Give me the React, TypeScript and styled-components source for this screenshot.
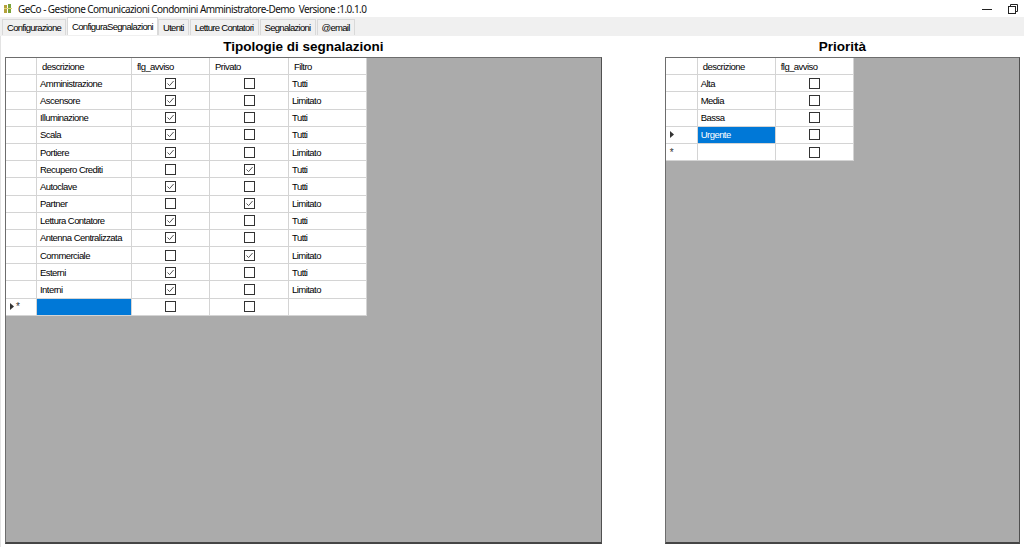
import React from 'react'
import styled, { createGlobalStyle } from 'styled-components'

const GlobalStyle = createGlobalStyle`
  html, body {
    margin: 0;
    padding: 0;
    background: #ffffff;
  }
  body {
    font-family: "Liberation Sans", Arial, sans-serif;
    font-size: 11px;
    color: #000;
  }
`

const Window = styled.div`
  width: 1024px;
  height: 547px;
  display: flex;
  flex-direction: column;
  background: #ffffff;
  overflow: hidden;
`

const TitleBar = styled.div`
  height: 17px;
  display: flex;
  align-items: center;
  padding-left: 4px;
  font-family: "Noto Sans", "Open Sans", sans-serif;
  font-size: 10px;
  color: #111;
`

const TitleText = styled.span`
  margin-left: 6px;
  white-space: pre;
  letter-spacing: -0.55px;
`

const WindowButtons = styled.div`
  margin-left: auto;
  display: flex;
  align-items: center;
  gap: 16px;
  padding-right: 6px;
`

const TabStrip = styled.div`
  height: 18px;
  display: flex;
  align-items: flex-end;
  background: #f0f0f0;
  padding-left: 2px;
  border-bottom: 1px solid #f0f0f0;
`

const Tab = styled.div<{ $active?: boolean }>`
  height: ${(p) => (p.$active ? 18 : 16)}px;
  display: flex;
  align-items: center;
  padding: 0 4px;
  margin-right: ${(p) => (p.$active ? 0 : 1)}px;
  background: ${(p) => (p.$active ? '#ffffff' : '#f0f0f0')};
  border: 1px solid #d9d9d9;
  border-bottom: none;
  box-sizing: border-box;
  font-size: 9.5px;
  letter-spacing: -0.7px;
  white-space: nowrap;
`

const Page = styled.div`
  flex: 1;
  display: flex;
  gap: 63px;
  padding: 0 4px 3px 4px;
  border-left: 1px solid #e3e3e3;
  min-height: 0;
`

const Panel = styled.div<{ $width: number }>`
  width: ${(p) => p.$width}px;
  display: flex;
  flex-direction: column;
`

const PanelTitle = styled.div`
  height: 21px;
  display: flex;
  align-items: center;
  justify-content: center;
  font-size: 13.5px;
  font-weight: bold;
`

const GridFrame = styled.div`
  flex: 1;
  background: #ababab;
  border-top: 1px solid #6d6d6d;
  border-left: 1px solid #6d6d6d;
  border-right: 1px solid #505050;
  border-bottom: 2px solid #454545;
  box-sizing: border-box;
  display: flex;
  align-items: flex-start;
`

const Table = styled.div<{ $cols: string }>`
  display: grid;
  grid-template-columns: ${(p) => p.$cols};
  background: #ffffff;
`

const Cell = styled.div<{ $center?: boolean; $selected?: boolean }>`
  height: 17.2px;
  box-sizing: border-box;
  border-right: 1px solid #d4d4d4;
  border-bottom: 1px solid #d4d4d4;
  display: flex;
  align-items: center;
  justify-content: ${(p) => (p.$center ? 'center' : 'flex-start')};
  padding-left: ${(p) => (p.$center ? 0 : 3)}px;
  background: ${(p) => (p.$selected ? '#0078d7' : '#ffffff')};
  color: ${(p) => (p.$selected ? '#ffffff' : '#000000')};
  font-size: 9.5px;
  letter-spacing: -0.55px;
  white-space: nowrap;
  overflow: hidden;
`

const HeaderCell = styled(Cell)`
  padding-left: 5px;
`

const RowHeader = styled(Cell)`
  padding-left: 4px;
  font-size: 10px;
  letter-spacing: 0;
  color: #333;
`

const Box = styled.span`
  width: 11px;
  height: 11px;
  box-sizing: border-box;
  border: 1px solid #333;
  background: #fff;
  display: flex;
  align-items: center;
  justify-content: center;
`

const Check = ({ on }: { on: boolean }) => (
  <Box>
    {on && (
      <svg width="9" height="9" viewBox="0 0 9 9">
        <path d="M1.5 4.5 L3.6 6.6 L7.6 2" fill="none" stroke="#555" strokeWidth="1" />
      </svg>
    )}
  </Box>
)

const Arrow = () => (
  <svg width="5" height="7" viewBox="0 0 5 7">
    <path d="M0 0 L4 3.5 L0 7 Z" fill="#333" />
  </svg>
)

const tipologie: [string, boolean, boolean, string][] = [
  ['Amministrazione', true, false, 'Tutti'],
  ['Ascensore', true, false, 'Limitato'],
  ['Illuminazione', true, false, 'Tutti'],
  ['Scala', true, false, 'Tutti'],
  ['Portiere', true, false, 'Limitato'],
  ['Recupero Crediti', false, true, 'Tutti'],
  ['Autoclave', true, false, 'Tutti'],
  ['Partner', false, true, 'Limitato'],
  ['Lettura Contatore', true, false, 'Tutti'],
  ['Antenna Centralizzata', true, false, 'Tutti'],
  ['Commerciale', false, true, 'Limitato'],
  ['Esterni', true, false, 'Tutti'],
  ['Interni', true, false, 'Limitato'],
]

const priorita = ['Alta', 'Media', 'Bassa', 'Urgente']

const tabs = ['Configurazione', 'ConfiguraSegnalazioni', 'Utenti', 'Letture Contatori', 'Segnalazioni', '@email']

const AppIcon = () => (
  <svg width="8" height="10" viewBox="0 0 8 10">
    <rect x="0" y="1" width="3" height="8" fill="#b5a13a" />
    <rect x="4" y="0" width="3" height="9" fill="#7aa33b" />
    <rect x="0" y="4" width="8" height="1" fill="#e0d27a" />
  </svg>
)

export default function App() {
  return (
    <Window>
      <GlobalStyle />
      <TitleBar>
        <AppIcon />
        <TitleText>GeCo - Gestione Comunicazioni Condomini Amministratore-Demo  Versione :1.0.1.0</TitleText>
        <WindowButtons>
          <svg width="10" height="10" viewBox="0 0 10 10">
            <path d="M0 5.5 H10" stroke="#222" strokeWidth="1" />
          </svg>
          <svg width="10" height="10" viewBox="0 0 10 10">
            <rect x="0.5" y="2.5" width="7" height="7" fill="none" stroke="#222" />
            <path d="M2.5 2.5 V0.5 H9.5 V7.5 H7.5" fill="none" stroke="#222" />
          </svg>
        </WindowButtons>
      </TitleBar>
      <TabStrip>
        {tabs.map((t) => (
          <Tab key={t} $active={t === 'ConfiguraSegnalazioni'}>
            {t}
          </Tab>
        ))}
      </TabStrip>
      <Page>
        <Panel $width={598}>
          <PanelTitle>Tipologie di segnalazioni</PanelTitle>
          <GridFrame>
            <Table $cols="31px 95px 78px 79px 78px">
              <RowHeader />
              <HeaderCell>descrizione</HeaderCell>
              <HeaderCell>flg_avviso</HeaderCell>
              <HeaderCell>Privato</HeaderCell>
              <HeaderCell>Filtro</HeaderCell>
              {tipologie.map(([d, f, p, filtro]) => (
                <React.Fragment key={d}>
                  <RowHeader />
                  <Cell>{d}</Cell>
                  <Cell $center>
                    <Check on={f} />
                  </Cell>
                  <Cell $center>
                    <Check on={p} />
                  </Cell>
                  <Cell>{filtro}</Cell>
                </React.Fragment>
              ))}
              <RowHeader>
                <Arrow />
                <span style={{ marginLeft: 1 }}>*</span>
              </RowHeader>
              <Cell $selected />
              <Cell $center>
                <Check on={false} />
              </Cell>
              <Cell $center>
                <Check on={false} />
              </Cell>
              <Cell />
            </Table>
          </GridFrame>
        </Panel>
        <Panel $width={356}>
          <PanelTitle>Priorità</PanelTitle>
          <GridFrame>
            <Table $cols="32px 78px 78px">
              <RowHeader />
              <HeaderCell>descrizione</HeaderCell>
              <HeaderCell>flg_avviso</HeaderCell>
              {priorita.map((d) => (
                <React.Fragment key={d}>
                  <RowHeader>{d === 'Urgente' && <Arrow />}</RowHeader>
                  <Cell $selected={d === 'Urgente'}>{d}</Cell>
                  <Cell $center>
                    <Check on={false} />
                  </Cell>
                </React.Fragment>
              ))}
              <RowHeader>*</RowHeader>
              <Cell />
              <Cell $center>
                <Check on={false} />
              </Cell>
            </Table>
          </GridFrame>
        </Panel>
      </Page>
    </Window>
  )
}
